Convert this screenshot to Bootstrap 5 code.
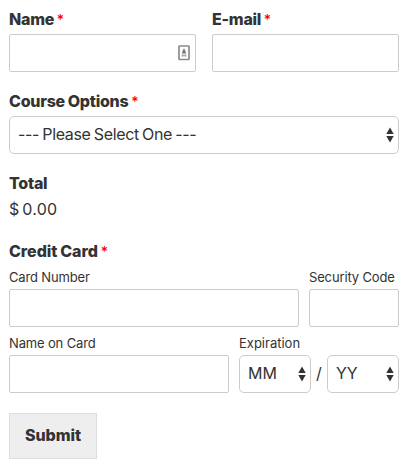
<!DOCTYPE html>
<html lang="en">
<head>
<meta charset="utf-8">
<meta name="viewport" content="width=device-width, initial-scale=1">
<title>Course Payment</title>
<link href="https://cdn.jsdelivr.net/npm/bootstrap@5.3.0/dist/css/bootstrap.min.css" rel="stylesheet">
<style>
body { font-family: Inter, "Liberation Sans", sans-serif; font-size: 16px; line-height: 20px; color: #333; background: #fff; }
.order-form { padding: 9px 10px 0 9px; }
.field-label { display: block; height: 20px; margin-bottom: 5px; font-weight: 800; letter-spacing: -.25px; word-spacing: -.5px; white-space: nowrap; }
.card-title-label { letter-spacing: -.05px; }
.req { color: #f00; font-size: 14px; font-weight: 500; letter-spacing: 0; line-height: 1; }
.sub-label { display: block; height: 16px; line-height: 16px; margin-bottom: 4px; font-size: 13px; letter-spacing: -.15px; white-space: nowrap; }
.sub-label-wide { letter-spacing: 0; }
.order-form .form-control { height: 38px; border: 1px solid #ccc; border-radius: 2px; padding: 6px 10px; }
.order-form .form-select { height: 38px; border: 1px solid #ccc; border-radius: 5px; padding: 0 20px 2px 8px; font-size: 16px; line-height: 20px; color: #333;
  background: #fff url("data:image/svg+xml,%3Csvg xmlns='http://www.w3.org/2000/svg' width='8' height='16' viewBox='0 0 8 16'%3E%3Cpath d='M4 .5 7.7 7H.3zM4 15.5 7.7 9H.3z' fill='%23333'/%3E%3C/svg%3E") no-repeat right 4px top 10px / 8px 16px; }
.order-form .course-select { letter-spacing: -.35px; word-spacing: -.9px; }
.block-gap { margin-top: 19px; }
.card-block { margin-top: 22px; }
.pair { gap: 16px; }
.card-row { gap: 10px; }
.contact-icon { right: 6px; top: 11px; }
.price { margin-top: 6px; height: 20px; letter-spacing: .3px; word-spacing: -2.2px; }
.w-code { width: 90px; }
.w-exp { width: 160px; }
.order-form .date-part { width: 72px; }
.slash { width: 16px; text-align: center; line-height: 16px; padding-bottom: 2px; }
.btn-send { width: 88px; height: 46px; margin-top: 20px; padding: 0 0 2px; border: 1px solid #ddd; border-radius: 0; background: #eee; color: #333; font-weight: 800; font-size: 16px; line-height: 20px; letter-spacing: -.05px; }
</style>
</head>
<body>
<form class="order-form">
  <div class="d-flex pair">
    <div class="flex-fill w-50">
      <label class="field-label" for="name">Name <span class="req">*</span></label>
      <div class="position-relative">
        <input id="name" class="form-control" type="text">
        <svg class="contact-icon position-absolute" width="12" height="16" viewBox="0 0 12 16" aria-hidden="true">
          <rect x="1" y="1" width="10" height="13.5" rx=".5" fill="#fff" stroke="#8c8c8c" stroke-width="1.7"/>
          <path d="M6 3.3 7.2 5.5 8.2 8.5H3.8L4.8 5.5z" fill="#777"/>
          <path d="M3.5 10.5h5" stroke="#aaa" stroke-width="2"/>
        </svg>
      </div>
    </div>
    <div class="flex-fill w-50">
      <label class="field-label" for="email">E-mail <span class="req">*</span></label>
      <input id="email" class="form-control" type="email">
    </div>
  </div>

  <div class="block-gap">
    <label class="field-label" for="course">Course Options <span class="req">*</span></label>
    <select id="course" class="form-select course-select"><option>--- Please Select One ---</option></select>
  </div>

  <div class="block-gap">
    <span class="field-label mb-0">Total</span>
    <div class="price">$ 0.00</div>
  </div>

  <div class="card-block">
    <span class="field-label card-title-label mb-2">Credit Card <span class="req">*</span></span>
    <div class="d-flex card-row">
      <div class="flex-grow-1">
        <label class="sub-label" for="number">Card Number</label>
        <input id="number" class="form-control" type="text">
      </div>
      <div class="w-code">
        <label class="sub-label" for="code">Security Code</label>
        <input id="code" class="form-control" type="text">
      </div>
    </div>
    <div class="d-flex card-row mt-2">
      <div class="flex-grow-1">
        <label class="sub-label" for="holder">Name on Card</label>
        <input id="holder" class="form-control" type="text">
      </div>
      <div class="w-exp">
        <label class="sub-label sub-label-wide" for="month">Expiration</label>
        <div class="d-flex align-items-center">
          <select id="month" class="form-select date-part"><option>MM</option></select>
          <span class="slash">/</span>
          <select class="form-select date-part" aria-label="Year"><option>YY</option></select>
        </div>
      </div>
    </div>
  </div>

  <button class="btn btn-send" type="button">Submit</button>
</form>
<script src="https://cdn.jsdelivr.net/npm/bootstrap@5.3.0/dist/js/bootstrap.bundle.min.js"></script>
</body>
</html>
